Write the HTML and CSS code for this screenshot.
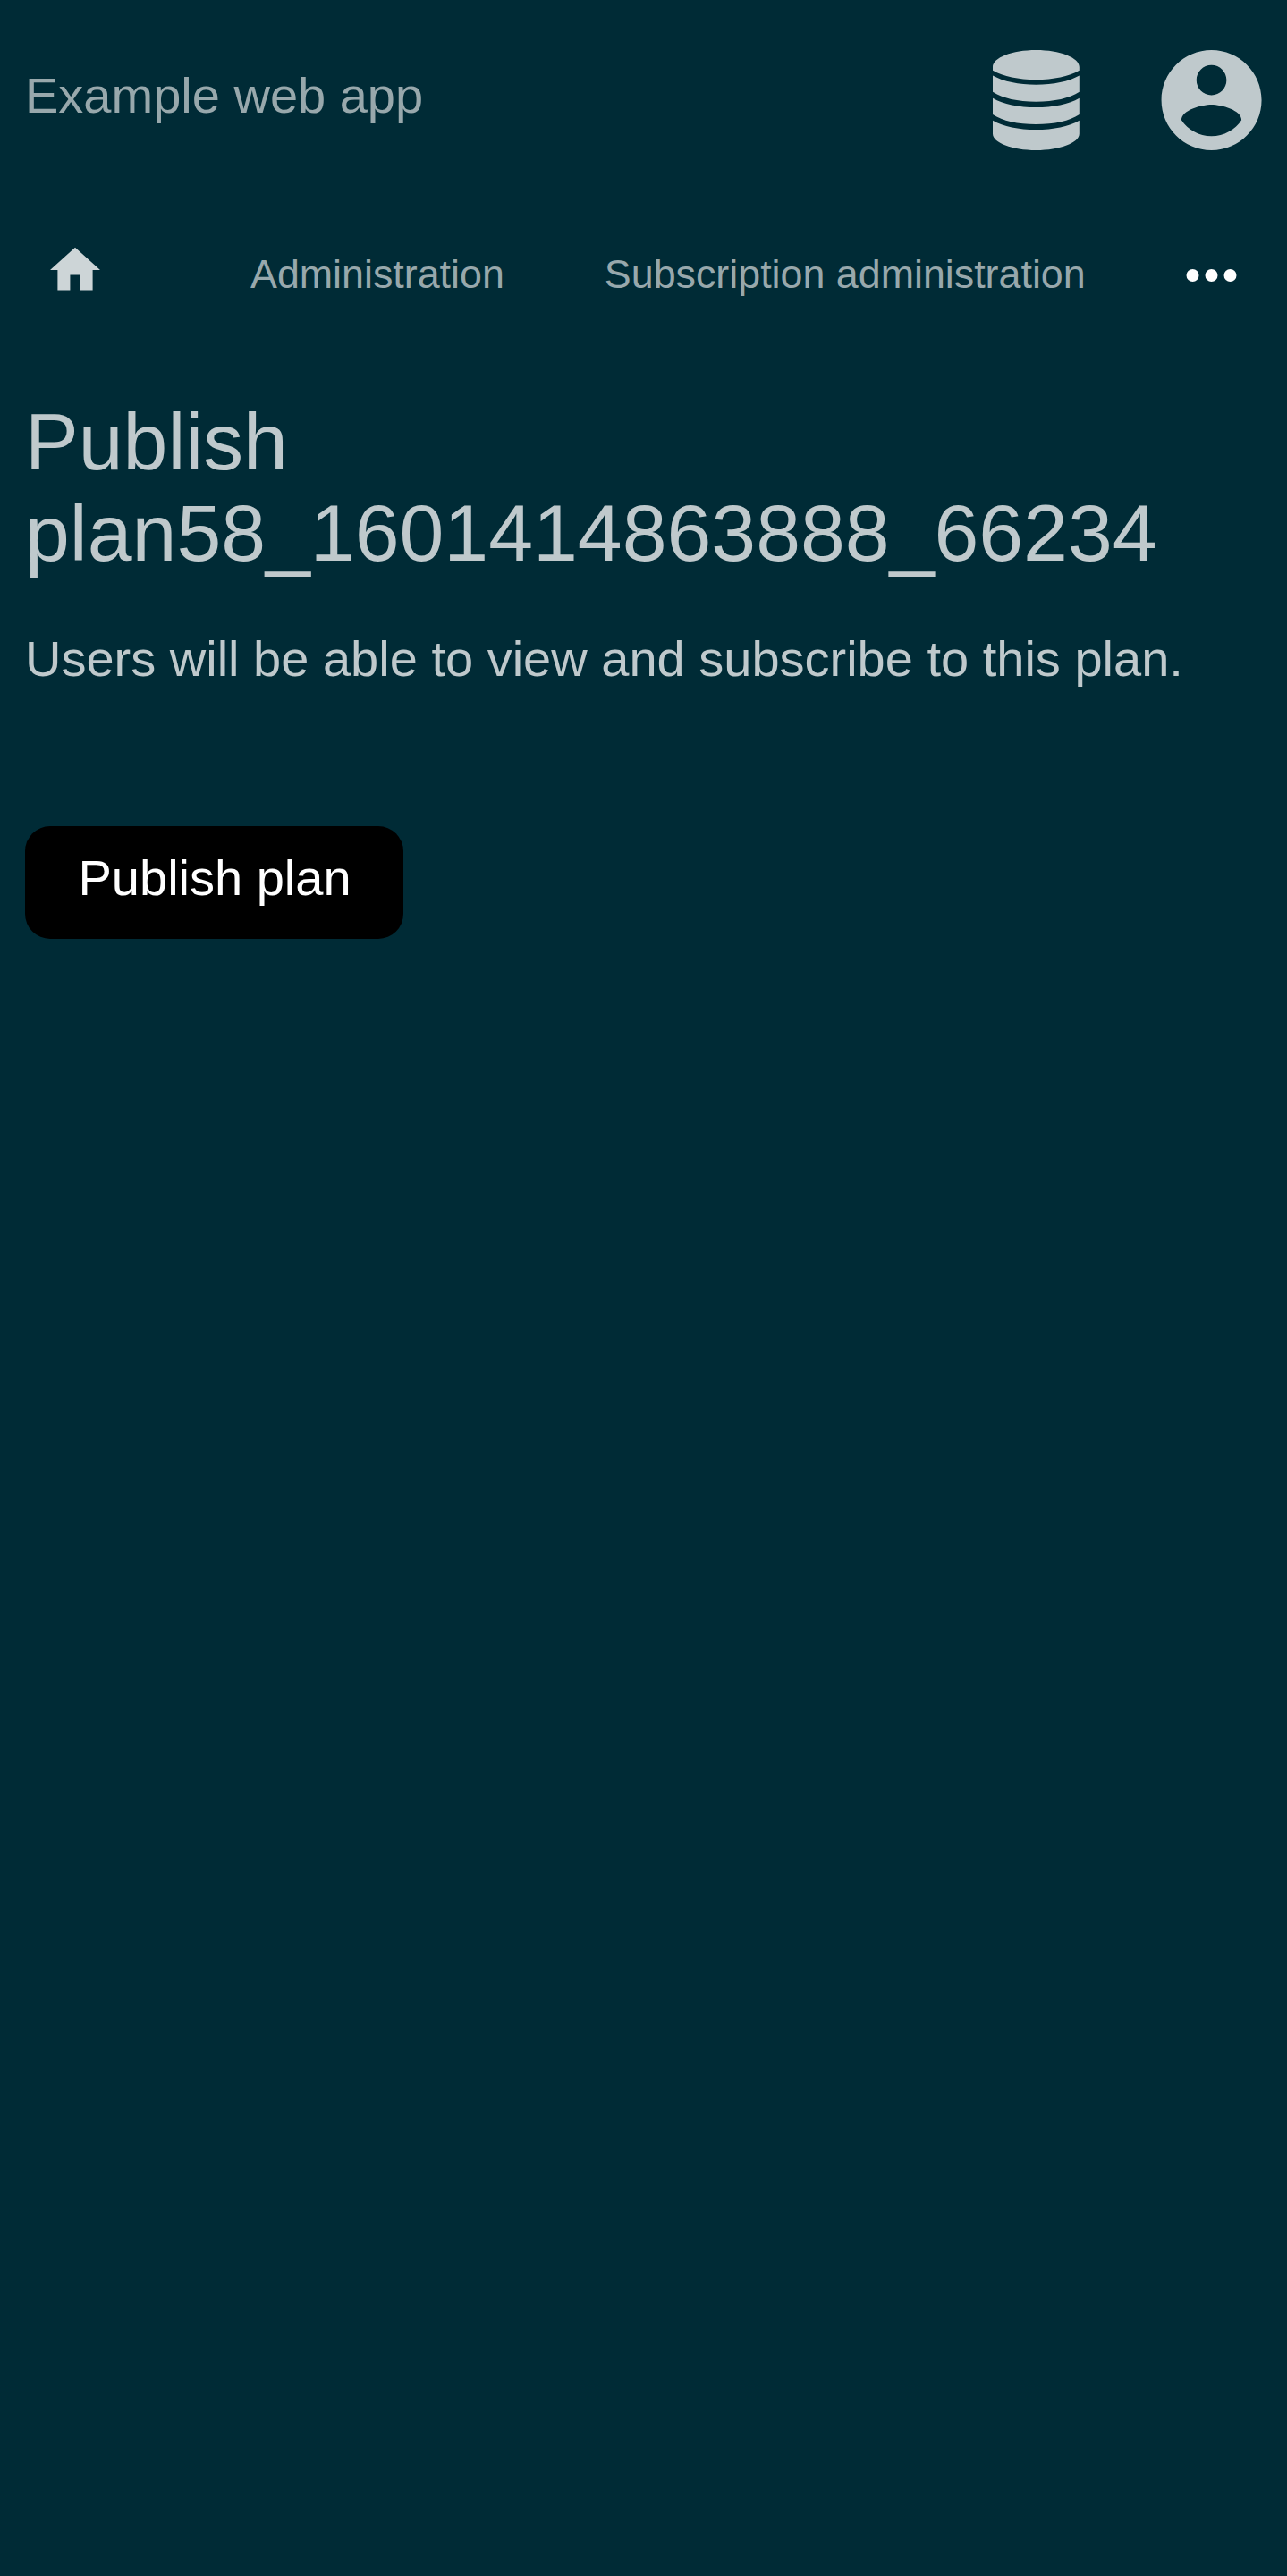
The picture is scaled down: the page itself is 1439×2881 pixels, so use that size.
FILE: index.html
```html
<!DOCTYPE html>
<html lang="en">
<head>
<meta charset="utf-8">
<title>Publish plan</title>
<link rel="stylesheet" href="styles.css">
</head>
<body>
<header class="header">
  <a class="brand">Example web app</a>
  <div class="menus">
    <svg class="menu-icon" viewBox="-0.4 0 112 112"><path d="M56 0C82.700 0 104.400 8.500 104.400 19V22.700C92.500 29.500 75.500 33 56 33S19.500 29.500 7.600 22.700V19C7.600 8.500 29.300 0 56 0zM7.600 28.500C19.500 35.200 36.500 38.700 56 38.700S92.500 35.200 104.400 28.500V46.800C93.500 54 76.500 57.700 56 57.700S18.500 54 7.600 46.800zM7.600 53.700C19.500 60.500 36.500 64 56 64S92.500 60.500 104.400 53.700V72C93.500 79.200 76.500 83 56 83S18.500 79.200 7.600 72zM7.600 78.700C19.500 85.500 36.500 89 56 89S92.500 85.500 104.400 78.700V93.500C104.400 103.700 82.700 112 56 112S7.600 103.700 7.600 93.500z"/></svg>
    <svg class="menu-icon" viewBox="1.9 2 20 20"><path d="M12 2C6.480 2 2 6.480 2 12s4.480 10 10 10 10-4.480 10-10S17.520 2 12 2zm0 3c1.660 0 3 1.340 3 3s-1.340 3-3 3-3-1.340-3-3 1.340-3 3-3zm0 14.200c-2.500 0-4.710-1.280-6-3.220.03-1.990 4-3.080 6-3.080 1.990 0 5.970 1.090 6 3.080-1.290 1.940-3.500 3.220-6 3.220z"/></svg>
  </div>
</header>
<nav class="nav">
  <svg class="home" viewBox="2 2 20 20"><path d="M10 20v-6h4v6h5v-8h3L12 3 2 12h3v8z"/></svg>
  <a class="link">Administration</a>
  <a class="link">Subscription administration</a>
  <svg class="more" viewBox="-0.5 0 56 14"><circle cx="7" cy="7" r="7"/><circle cx="28" cy="7" r="7"/><circle cx="49" cy="7" r="7"/></svg>
</nav>
<main class="content">
  <h1 class="title">Publish plan58_1601414863888_66234</h1>
  <p class="text">Users will be able to view and subscribe to this plan.</p>
  <button class="button">Publish plan</button>
</main>
</body>
</html>
```
FILE: styles.css
```css
body {
  margin: 0;
  min-height: 2881px;
  background: #002b36;
  color: #bfc9cc;
  font: 56px/64px "Liberation Sans", Arial, sans-serif;
}
svg {
  overflow: visible;
}
.header {
  display: flex;
  justify-content: space-between;
  align-items: flex-start;
  height: 168px;
  padding: 56px 29px 0 28px;
}
.brand {
  margin-top: 19px;
  color: #98a8ac;
}
.menus {
  display: flex;
  gap: 84px;
}
.menu-icon {
  width: 112px;
  height: 112px;
  fill: #bfc9cc;
}
.nav {
  display: flex;
  align-items: flex-start;
  height: 169px;
  padding: 50px 57px 0 56px;
  font-size: 44.8px;
  line-height: 52px;
  white-space: nowrap;
}
.home {
  width: 56px;
  height: 56px;
  margin-right: 168px;
  fill: #cdd5d7;
}
.link {
  margin-top: 6px;
  margin-right: 112px;
  color: #98a8ac;
}
.more {
  width: 56px;
  height: 14px;
  margin: 27px 0 0 auto;
  fill: #fff;
}
.content {
  padding: 0 28px;
}
.title {
  margin: 0;
  font-size: 89.6px;
  font-weight: 400;
  line-height: 102px;
}
.text {
  margin: 58px 0 155px;
}
.button {
  display: block;
  height: 126px;
  padding: 0 58.5px 10px 59.5px;
  border: 0;
  border-radius: 28px;
  background: #000;
  color: #fff;
  font: inherit;
}
```
